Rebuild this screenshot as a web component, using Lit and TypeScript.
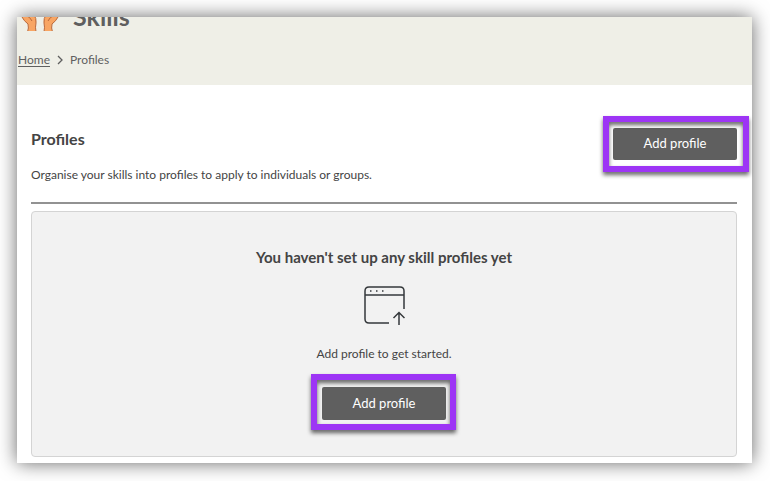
import { LitElement, html, css } from "lit";
import { customElement } from "lit/decorators.js";

@customElement("app-root")
export class AppRoot extends LitElement {
  static styles = css`
    :host {
      display: block;
      padding: 17px 18px 18px 17px;
      background: #fff;
      color: #444;
      font: 12px/16px Lato, "Open Sans", sans-serif;
    }
    * {
      box-sizing: border-box;
    }
    h1, h2, h3, p, ol {
      margin: 0;
      padding: 0;
    }
    .window {
      background: #fff;
      box-shadow: 0 0 18px rgba(0, 0, 0, 0.6);
    }
    .banner {
      background: #efefe7;
      color: #5f5f5f;
      padding-bottom: 17px;
    }
    .brand {
      display: flex;
      align-items: flex-end;
      gap: 14px;
      height: 14px;
      padding-left: 4px;
      overflow: hidden;
    }
    .hands {
      flex: none;
      width: 38px;
      height: 38px;
    }
    h1 {
      font-size: 25px;
      line-height: 30px;
    }
    .crumbs {
      display: flex;
      align-items: center;
      gap: 7px;
      margin-top: 21px;
      padding-left: 1px;
      list-style: none;
    }
    .crumbs li {
      display: flex;
      align-items: center;
      gap: 7px;
    }
    .crumbs a {
      color: inherit;
      text-underline-offset: 2px;
    }
    .chevron {
      width: 6px;
      height: 10px;
    }
    main {
      padding: 43px 15px 6px 14px;
    }
    .intro {
      display: flex;
      justify-content: space-between;
      align-items: flex-start;
      padding-bottom: 19px;
      border-bottom: 2px solid #929292;
    }
    h2 {
      font-size: 16px;
      line-height: 22px;
    }
    h3 {
      font-size: 15px;
      line-height: 22px;
    }
    .intro p {
      margin-top: 17px;
    }
    .highlight {
      position: relative;
      display: flex;
    }
    .highlight::after {
      content: "";
      position: absolute;
      inset: -12px -12px -12px -10px;
      border: 6px solid #9d35f5;
      filter: drop-shadow(0 3px 2px rgba(0, 0, 0, 0.6));
      pointer-events: none;
    }
    button {
      width: 124px;
      height: 32px;
      padding: 0 0 2px;
      border: 0;
      border-radius: 2px;
      background: #5f5f5f;
      color: #fff;
      font: 13px/20px Lato, "Open Sans", sans-serif;
      cursor: pointer;
    }
    .empty {
      display: flex;
      flex-direction: column;
      align-items: center;
      margin-top: 7px;
      padding: 34px 16px 36px;
      border: 1px solid #d4d4d4;
      border-radius: 4px;
      background: #f2f2f2;
    }
    .upload {
      width: 42px;
      height: 40px;
      margin: 18px 0 20px;
    }
    .empty .highlight {
      margin-top: 25px;
    }
    .empty .highlight::after {
      inset: -13px -10px -10px -11px;
    }
    .empty button {
      height: 33px;
    }
  `;

  private addButton() {
    return html`<div class="highlight"><button type="button">Add profile</button></div>`;
  }

  render() {
    return html`
      <div class="window">
        <header class="banner">
          <div class="brand">
            <svg class="hands" viewBox="0 0 38 38" aria-hidden="true">
              <g fill="#f8a563" stroke="#b9683a" stroke-width="1">
                <path d="M1 20 V24 Q3 28 7 31 Q8 35 6.500 39 H15 Q14 34 15 30 Q16 26 12 20 Z" />
                <path d="M37 20 V24 Q35 28 31 31 Q30 35 31.500 39 H23 Q24 34 23 30 Q22 26 26 20 Z" />
                <path d="M6 23 Q9 24 11 28 M32 23 Q29 24 27 28" fill="none" />
              </g>
            </svg>
            <h1>Skills</h1>
          </div>
          <nav aria-label="Breadcrumb">
            <ol class="crumbs">
              <li>
                <a href="#home">Home</a>
                <svg class="chevron" viewBox="0 0 6 10" aria-hidden="true">
                  <path d="M1 1 L5 5 L1 9" fill="none" stroke="#5f5f5f" stroke-width="1.300" />
                </svg>
              </li>
              <li aria-current="page">Profiles</li>
            </ol>
          </nav>
        </header>
        <main>
          <section class="intro">
            <div>
              <h2>Profiles</h2>
              <p>Organise your skills into profiles to apply to individuals or groups.</p>
            </div>
            ${this.addButton()}
          </section>
          <section class="empty">
            <h3>You haven't set up any skill profiles yet</h3>
            <svg class="upload" viewBox="0 0 42 40" fill="none" stroke="#35393c" stroke-width="1.500" aria-hidden="true">
              <path d="M26 37 H6 Q2 37 2 33 V5 Q2 1 6 1 H37 Q41 1 41 5 V23" />
              <path d="M2 9 H41" />
              <path d="M36 39 V27 M30.500 32 L36 26.500 L41.500 32" />
              <path d="M7 5 H8.500 M13 5 H14.500 M19 5 H20.500" />
            </svg>
            <p>Add profile to get started.</p>
            ${this.addButton()}
          </section>
        </main>
      </div>
    `;
  }
}
